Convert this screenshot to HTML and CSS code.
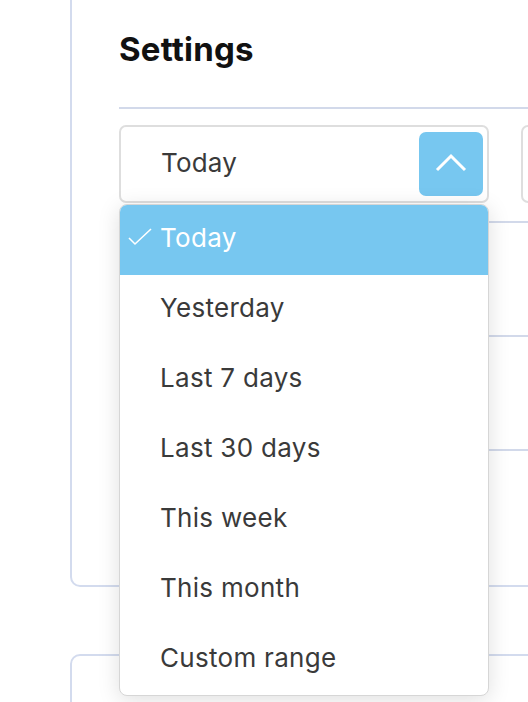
FILE: index.html
```html
<!DOCTYPE html>
<html lang="en">
<head>
<meta charset="utf-8">
<title>Settings</title>
<link rel="stylesheet" href="styles.css">
</head>
<body>
<div class="page">
  <section class="card card-settings">
    <h1 class="title">Settings</h1>
    <div class="divider"></div>
    <div class="controls">
      <div class="select select-open">
        <span class="select-value">Today</span>
        <span class="select-btn">
          <svg width="32" height="20" viewBox="0 0 32 20"><path d="M2 18 L16 4 L30 18" fill="none" stroke="#fff" stroke-width="3"/></svg>
        </span>
        <ul class="menu">
          <li class="menu-item active">
            <svg class="check" width="24" height="18" viewBox="0 0 24 18"><path d="M1 10 L7 16 L23 1" fill="none" stroke="#fff" stroke-width="1.6"/></svg>
            Today
          </li>
          <li class="menu-item">Yesterday</li>
          <li class="menu-item">Last 7 days</li>
          <li class="menu-item">Last 30 days</li>
          <li class="menu-item">This week</li>
          <li class="menu-item">This month</li>
          <li class="menu-item">Custom range</li>
        </ul>
      </div>
      <div class="select">
        <span class="select-value"></span>
        <span class="select-btn"></span>
      </div>
    </div>
    <div class="rows">
      <div class="row"></div>
      <div class="row"></div>
      <div class="row"></div>
    </div>
  </section>
  <section class="card card-next"></section>
</div>
</body>
</html>
```

FILE: styles.css
```css
html, body {
  margin: 0;
  padding: 0;
  background: #ffffff;
  overflow: hidden;
  height: 702px;
}

body {
  font-family: Inter, "Noto Sans", sans-serif;
  color: #3b3b3b;
}

.page {
  padding-left: 70px;
}

.card {
  width: 640px;
  border: 2px solid #d3dbee;
  border-radius: 10px;
  box-sizing: border-box;
}

.card-settings {
  margin-top: -30px;
  padding: 57px 0 0 47px;
  height: 617px;
}

.card-next {
  margin-top: 67px;
  height: 200px;
}

.title {
  margin: 0;
  font-size: 33px;
  line-height: 40px;
  font-weight: 700;
  color: #111111;
  letter-spacing: 0.2px;
}

.divider {
  margin-top: 38px;
  height: 2px;
  background: #d2d9ea;
}

.controls {
  margin-top: 16px;
  display: flex;
  gap: 32px;
}

.select {
  position: relative;
  width: 370px;
  height: 78px;
  box-sizing: border-box;
  border: 2px solid #dedede;
  border-radius: 7px;
  padding: 5px 4px 5px 40px;
  display: flex;
  align-items: center;
  justify-content: space-between;
  flex-shrink: 0;
}

.select-value {
  font-size: 26px;
  letter-spacing: 0.2px;
  color: #3a3a3a;
  padding-bottom: 4px;
}

.select-btn {
  width: 64px;
  height: 64px;
  border-radius: 7px;
  background: #77c7f0;
  display: flex;
  align-items: center;
  justify-content: center;
}

.select-btn svg {
  margin-top: -4px;
}

.menu {
  position: absolute;
  left: -2px;
  top: 77px;
  width: 370px;
  margin: 0;
  padding: 0;
  list-style: none;
  background: #ffffff;
  border: 1px solid #d6d6d6;
  border-radius: 8px;
  box-sizing: border-box;
  box-shadow: 0 4px 22px rgba(0, 0, 0, 0.13);
  overflow: hidden;
  z-index: 5;
}

.menu-item {
  position: relative;
  height: 70px;
  box-sizing: border-box;
  display: flex;
  align-items: center;
  padding: 0 0 5px 40px;
  font-size: 26px;
  letter-spacing: 0.3px;
  color: #3a3a3a;
}

.menu-item.active {
  background: #77c7f0;
  color: #ffffff;
}

.check {
  position: absolute;
  left: 8px;
  top: 23px;
}

.rows {
  margin-top: 18px;
}

.row {
  border-top: 2px solid #d2d9ea;
  height: 112px;
}
```
